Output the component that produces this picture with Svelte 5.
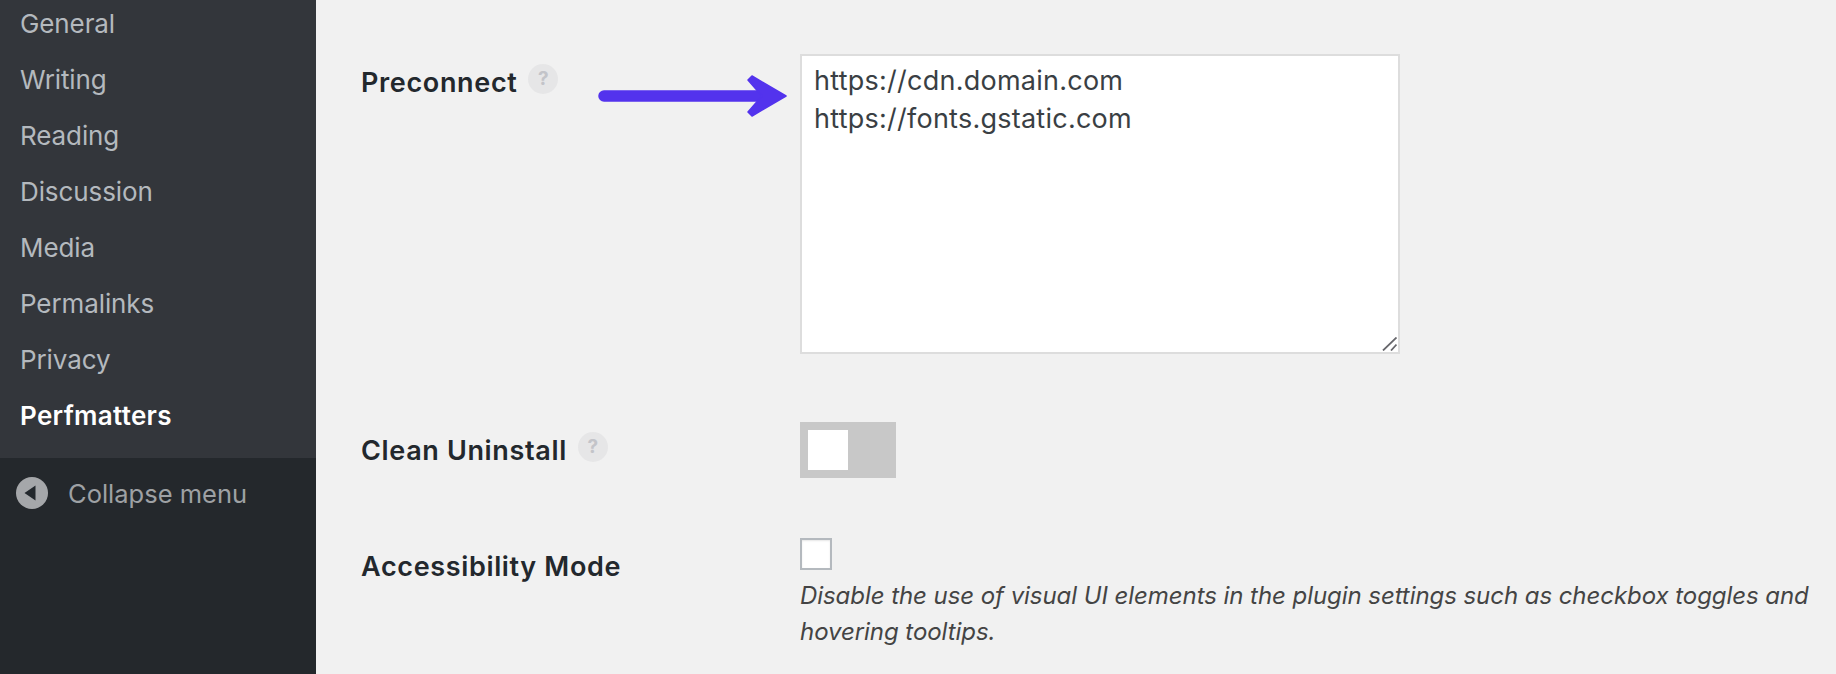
<script>
    const menu = ['General', 'Writing', 'Reading', 'Discussion', 'Media', 'Permalinks', 'Privacy', 'Perfmatters'];
    const origins = 'https://cdn.domain.com\nhttps://fonts.gstatic.com';
</script>

<div class="page">
    <aside class="sidebar">
        <ul class="submenu">
            {#each menu as item}
                <li class:current={item === 'Perfmatters'}>{item}</li>
            {/each}
        </ul>
        <div class="collapse">
            <svg class="collapse-icon" viewBox="0 0 32 32" aria-hidden="true">
                <circle cx="16" cy="16" r="16" fill="#a5a7aa" />
                <path d="M8.5 16 L19.5 8.5 V23.5 Z" fill="#23282d" />
            </svg>
            <span>Collapse menu</span>
        </div>
    </aside>

    <main class="settings">
        <div class="row row-preconnect">
            <div class="label">
                <span>Preconnect</span>
                <span class="help">?</span>
                <svg class="arrow" viewBox="0 0 190 44" aria-hidden="true">
                    <path d="M6 22 H172" stroke="#5333ed" stroke-width="11.5" stroke-linecap="round" fill="none" />
                    <path d="M154 2 L188 22 L154 42 L150 38 L164 22 L150 6 Z" fill="#5333ed" stroke="#5333ed" stroke-width="1.5" stroke-linejoin="round" />
                </svg>
            </div>
            <div class="origins-wrap">
                <textarea class="origins" readonly value={origins}></textarea>
                <svg class="grip" viewBox="0 0 15 14" aria-hidden="true">
                    <path d="M1 13.5 L14.5 0.5 M9 13.5 L14.5 7.5" stroke="#67676c" stroke-width="1.8" fill="none" />
                </svg>
            </div>
        </div>

        <div class="row row-clean">
            <div class="label">
                <span>Clean Uninstall</span>
                <span class="help">?</span>
            </div>
            <div class="toggle"><div class="knob"></div></div>
        </div>

        <div class="row row-access">
            <div class="label">
                <span>Accessibility Mode</span>
            </div>
            <div class="field">
                <div class="checkbox"></div>
                <p class="desc">Disable the use of visual UI elements in the plugin settings such as checkbox toggles and hovering tooltips.</p>
            </div>
        </div>
    </main>
</div>

<style>
    :global(body) {
        margin: 0;
        background: #f1f1f1;
        overflow: hidden;
    }

    .page {
        display: flex;
        height: 674px;
        overflow: hidden;
        font-family: Inter, "Noto Sans", sans-serif;
    }

    .sidebar {
        width: 316px;
        flex-shrink: 0;
        background: #24282c;
    }

    .submenu {
        list-style: none;
        margin: -5px 0 0;
        padding: 0 0 15px;
        background: #33363b;
    }

    .submenu li {
        height: 56px;
        line-height: 57px;
        padding-left: 20px;
        font-size: 26px;
        letter-spacing: -0.1px;
        color: #b4b9be;
    }

    .submenu li.current {
        color: #fff;
        font-weight: 600;
        letter-spacing: 0.3px;
    }

    .collapse {
        display: flex;
        align-items: center;
        gap: 20px;
        padding: 19px 0 0 16px;
        font-size: 25.5px;
        color: #9ea1a4;
    }

    .collapse-icon {
        width: 32px;
        height: 32px;
    }

    .settings {
        flex: 1;
        min-width: 0;
    }

    .row {
        display: flex;
    }

    .row-preconnect {
        padding-top: 54px;
    }

    .row-clean {
        padding-top: 68px;
    }

    .row-access {
        padding-top: 60px;
    }

    .label {
        position: relative;
        width: 484px;
        box-sizing: border-box;
        padding: 13px 0 0 45px;
        flex-shrink: 0;
        display: flex;
        align-items: flex-start;
        gap: 11px;
        font-size: 27px;
        font-weight: 600;
        letter-spacing: 0.65px;
        color: #23282d;
        line-height: 32px;
    }

    .row-clean .label {
        padding-top: 13px;
    }

    .help {
        width: 30px;
        height: 30px;
        border-radius: 50%;
        background: #e6e6e7;
        color: #c3c4c9;
        font-size: 19px;
        font-weight: 700;
        letter-spacing: 0;
        line-height: 30px;
        text-align: center;
        margin-top: -3px;
    }

    /* arrow sits over the gap between label and field */
    .arrow {
        position: absolute;
        left: 282px;
        top: 20px;
        width: 190px;
        height: 44px;
    }

    .origins-wrap {
        position: relative;
        width: 600px;
        height: 300px;
    }

    .origins {
        display: block;
        width: 100%;
        height: 100%;
        box-sizing: border-box;
        margin: 0;
        padding: 6px 12px;
        border: 2px solid #dddddd;
        background: #fff;
        color: #3a3f44;
        font-family: inherit;
        font-size: 27px;
        letter-spacing: 0.25px;
        line-height: 37.5px;
        outline: none;
        resize: none;
    }

    .grip {
        position: absolute;
        right: 3px;
        bottom: 3px;
        width: 15px;
        height: 14px;
    }

    .toggle {
        width: 96px;
        height: 56px;
        padding: 8px;
        box-sizing: border-box;
        background: #c8c8c8;
    }

    .knob {
        width: 40px;
        height: 40px;
        background: #fff;
    }

    .field {
        flex: 1;
        min-width: 0;
    }

    .checkbox {
        width: 32px;
        height: 32px;
        box-sizing: border-box;
        border: 2px solid #b4b9be;
        background: #fff;
        box-shadow: inset 0 1px 2px rgba(0, 0, 0, 0.1);
    }

    .desc {
        margin: 8px 0 0;
        max-width: 1030px;
        font-size: 24px;
        letter-spacing: -0.06px;
        line-height: 36px;
        font-style: italic;
        color: #444;
    }
</style>
